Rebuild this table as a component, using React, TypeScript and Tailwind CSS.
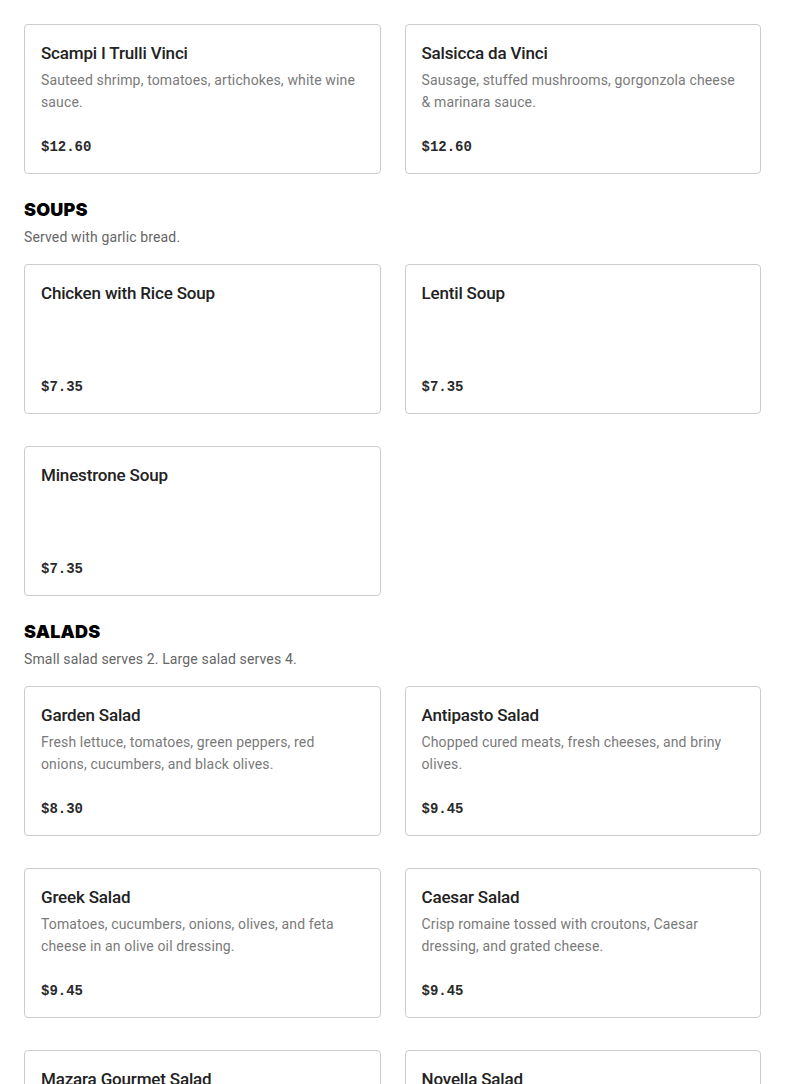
const SECTIONS = [
  {
    title: null,
    note: null,
    items: [
      { name: 'Scampi I Trulli Vinci', desc: 'Sauteed shrimp, tomatoes, artichokes, white wine sauce.', price: '$12.60' },
      { name: 'Salsicca da Vinci', desc: 'Sausage, stuffed mushrooms, gorgonzola cheese & marinara sauce.', price: '$12.60' },
    ],
  },
  {
    title: 'SOUPS',
    note: 'Served with garlic bread.',
    items: [
      { name: 'Chicken with Rice Soup', desc: '', price: '$7.35' },
      { name: 'Lentil Soup', desc: '', price: '$7.35' },
      { name: 'Minestrone Soup', desc: '', price: '$7.35' },
    ],
  },
  {
    title: 'SALADS',
    note: 'Small salad serves 2. Large salad serves 4.',
    items: [
      { name: 'Garden Salad', desc: 'Fresh lettuce, tomatoes, green peppers, red onions, cucumbers, and black olives.', price: '$8.30' },
      { name: 'Antipasto Salad', desc: 'Chopped cured meats, fresh cheeses, and briny olives.', price: '$9.45' },
      { name: 'Greek Salad', desc: 'Tomatoes, cucumbers, onions, olives, and feta cheese in an olive oil dressing.', price: '$9.45' },
      { name: 'Caesar Salad', desc: 'Crisp romaine tossed with croutons, Caesar dressing, and grated cheese.', price: '$9.45' },
      { name: 'Mazara Gourmet Salad', desc: 'Mixed greens, walnuts, dried cranberries, and goat cheese.', price: '$10.50' },
      { name: 'Novella Salad', desc: 'Baby spinach, strawberries, almonds, and balsamic vinaigrette.', price: '$10.50' },
    ],
  },
]

function MenuCard({ name, desc, price }: { name: string; desc: string; price: string }) {
  return (
    <div className="flex h-[150px] flex-col rounded border border-[#cccccc] bg-white px-4 pt-4 pb-4">
      <h3 className="text-[17px] leading-6 font-medium tracking-[-0.01em] text-[#222222]">{name}</h3>
      {desc && <p className="mt-1 text-sm leading-[22px] tracking-[0.01em] text-[#7a7a7a]">{desc}</p>}
      <p className="mt-auto font-['Liberation_Mono',monospace] text-sm leading-5 font-bold text-[#2a2a2a]">{price}</p>
    </div>
  )
}

export default function App() {
  return (
    <div className="min-h-screen bg-white px-6 pt-6 font-['Roboto',sans-serif]">
      {SECTIONS.map((s, i) => (
        <section key={i} className={i > 0 ? 'mt-6' : ''}>
          {s.title && (
            <>
              <h2 className="font-['Inter',sans-serif] text-lg leading-6 font-black tracking-[0.01em] text-black">{s.title}</h2>
              <p className="mt-[5px] mb-[17px] text-sm leading-5 tracking-[0.01em] text-[#666666]">{s.note}</p>
            </>
          )}
          <div className="grid grid-cols-2 gap-x-6 gap-y-8">
            {s.items.map((it) => (
              <MenuCard key={it.name} {...it} />
            ))}
          </div>
        </section>
      ))}
    </div>
  )
}
